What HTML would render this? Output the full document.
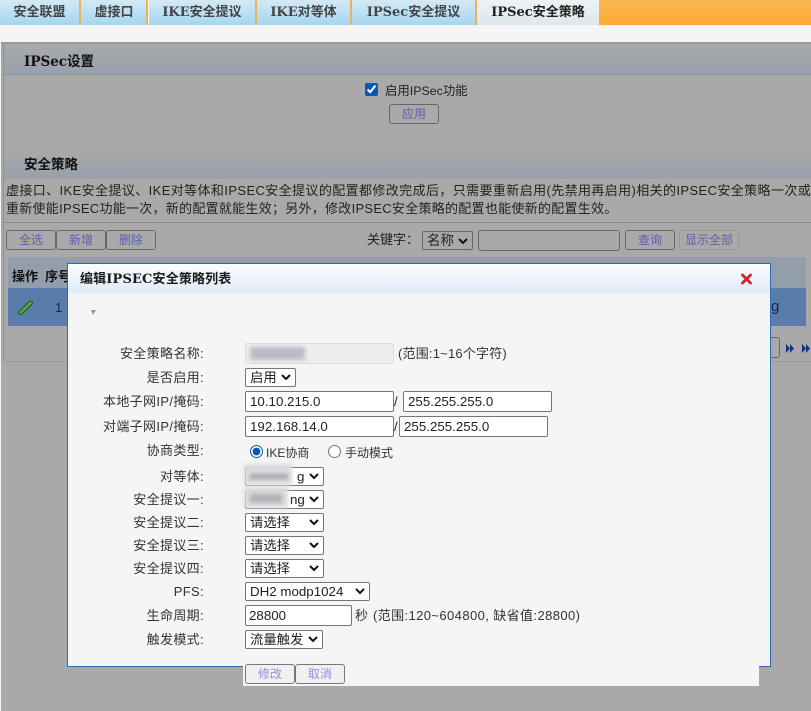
<!DOCTYPE html>
<html lang="zh">
<head>
<meta charset="utf-8">
<title>IPSec安全策略</title>
<style>
html,body{margin:0;padding:0;width:811px;height:711px;overflow:hidden;background:#f5f5f5;}
body{position:relative;font-family:"Liberation Sans","Noto Sans CJK SC",sans-serif;font-size:13px;color:#222;}
.a{position:absolute;white-space:nowrap;}
.tab{position:absolute;top:0;height:25px;line-height:25px;text-align:center;font-family:"DejaVu Serif","Noto Sans CJK SC",sans-serif;font-weight:bold;font-size:13px;color:#444;background:linear-gradient(#d4e9f5,#bfe1f3 45%,#a5d5ef);}
.sep{position:absolute;top:0;width:2px;height:25px;background:#e9b35c;}
.bar{position:absolute;left:4px;width:807px;background:linear-gradient(#a9a9a9,#98a1ac);}
.h{font-family:"DejaVu Serif","Noto Sans CJK SC",sans-serif;font-weight:bold;font-size:13.500px;color:#111;}
.btn{position:absolute;box-sizing:border-box;height:20px;border:1px solid #666;border-radius:3px;text-align:center;line-height:18px;font-size:12px;color:#5a62a8;}
.lbl{position:absolute;width:204px;left:0;text-align:right;font-size:13px;letter-spacing:.35px;color:#333;line-height:18px;white-space:nowrap;}
.in{position:absolute;box-sizing:border-box;height:21px;border:1px solid #767676;border-radius:2px;background:#fff;font-size:13.330px;line-height:19px;padding-left:4px;color:#222;}
.sel{position:absolute;box-sizing:border-box;height:19px;border:1px solid #767676;border-radius:2px;background:#fff;font-size:13.330px;line-height:18px;padding-left:4px;color:#222;}
.sel svg{position:absolute;right:4px;top:5px;}
.blur{position:absolute;filter:blur(2px);}
.note{font-size:13px;letter-spacing:.4px;line-height:18px;color:#333;}
.rad{font-size:12px;line-height:18px;color:#333;}
</style>
</head>
<body>
<div class="tab" style="left:0;width:79px">安全联盟</div>
<div class="tab" style="left:81px;width:66px">虚接口</div>
<div class="tab" style="left:149px;width:106px">IKE安全提议</div>
<div class="tab" style="left:257px;width:93px">IKE对等体</div>
<div class="tab" style="left:352px;width:123px">IPSec安全提议</div>
<div class="sep" style="left:79px"></div>
<div class="sep" style="left:146px"></div>
<div class="sep" style="left:255px"></div>
<div class="sep" style="left:350px"></div>
<div class="sep" style="left:475px"></div>
<div class="tab" style="left:477px;width:122px;border-radius:0 5px 0 0;background:linear-gradient(#eef2f4,#dfe7ec);color:#222">IPSec安全策略</div>
<div class="a" style="left:599px;top:0;width:212px;height:25px;background:linear-gradient(#f9b850,#fdaa33)"></div>

<div class="a" style="left:1px;top:42px;width:810px;height:669px;background:#a9a9a9"></div>
<div class="a" style="left:1px;top:42px;width:810px;height:2px;background:#969b9f"></div>
<div class="a" style="left:3px;top:44px;width:1px;height:316px;background:#8f9396"></div>

<div class="bar" style="top:44px;height:30px;border-bottom:1px solid #8a949e"></div>
<div class="a h" style="left:24px;top:50px">IPSec设置</div>
<input type="checkbox" checked class="a" style="left:365px;top:83px;margin:0;width:13px;height:13px;accent-color:#0b57b5">
<div class="a" style="left:385px;top:83px;font-size:12.400px;line-height:16px">启用IPSec功能</div>
<div class="btn" style="left:389px;top:104px;width:50px">应用</div>

<div class="bar" style="top:150px;height:28px;border-bottom:1px solid #a0a5aa"></div>
<div class="a h" style="left:24px;top:153px">安全策略</div>

<div class="a" style="left:6px;top:182px;font-size:13px;letter-spacing:.39px;line-height:18px;color:#222">虚接口、IKE安全提议、IKE对等体和IPSEC安全提议的配置都修改完成后，只需要重新启用(先禁用再启用)相关的IPSEC安全策略一次或</div>
<div class="a" style="left:6px;top:200px;font-size:13px;letter-spacing:.27px;line-height:18px;color:#222">重新使能IPSEC功能一次，新的配置就能生效；另外，修改IPSEC安全策略的配置也能使新的配置生效。</div>
<div class="a" style="left:4px;top:222px;width:807px;height:1px;background:#8a8a8a"></div>

<div class="btn" style="left:6px;top:230px;width:50px">全选</div>
<div class="btn" style="left:56px;top:230px;width:50px">新增</div>
<div class="btn" style="left:106px;top:230px;width:50px">删除</div>
<div class="a" style="left:367px;top:232px;font-size:13px;line-height:16px">关键字：</div>
<div class="a" style="left:422px;top:231px;box-sizing:border-box;width:51px;height:19px;border:1px solid #666;border-radius:2px;font-size:13.500px;line-height:18px;padding-left:4px">名称<svg width="10" height="7" viewBox="0 0 10 7" style="position:absolute;right:4px;top:6px"><path d="M1 1l4 4 4-4" fill="none" stroke="#111" stroke-width="2"/></svg></div>
<div class="a" style="left:478px;top:230px;box-sizing:border-box;width:142px;height:21px;border:1px solid #666;border-radius:3px"></div>
<div class="btn" style="left:625px;top:230px;width:50px">查询</div>
<div class="btn" style="left:679px;top:230px;width:60px;border-color:#999">显示全部</div>

<div class="a" style="left:8px;top:288px;width:798px;height:38px;background:#5a7cab"></div>
<div class="a" style="left:8px;top:257px;width:798px;height:31px;background:#929eab"></div>
<div class="a" style="left:12px;top:266px;font-weight:bold;font-size:13px;color:#111">操作</div>
<div class="a" style="left:45px;top:266px;font-weight:bold;font-size:13px;color:#111">序号</div>
<svg class="a" style="left:18px;top:300px" width="16" height="15" viewBox="0 0 16 15"><path d="M2.500 12.500L12.500 3" fill="none" stroke="#2a5f25" stroke-width="5" stroke-linecap="round"/><path d="M2.500 12.500L12.500 3" fill="none" stroke="#58ab40" stroke-width="2.500" stroke-linecap="round"/></svg>
<div class="a" style="left:55px;top:300px;font-size:13px;color:#1a2a3a">1</div>
<div class="a" style="left:771px;top:298px;font-size:15px;color:#1a2a3a">g</div>
<div class="a" style="left:4px;top:361px;width:807px;height:1px;background:#999"></div>
<div class="a" style="left:771px;top:337px;width:9px;height:21px;box-sizing:border-box;border:1px solid #666;border-left:none;border-radius:0 3px 3px 0"></div>
<svg class="a" style="left:786px;top:344px" width="25" height="9" viewBox="0 0 25 9"><path d="M0 0l4 4.500-4 4.500zM4 0l4 4.500-4 4.500zM16 0l4 4.500-4 4.500zM20 0l4 4.500-4 4.500z" fill="#12357a"/></svg>

<!-- dialog -->
<div class="a" style="left:67px;top:263px;width:704px;height:404px;box-sizing:border-box;border:1px solid #2a6db5;background:#f5f5f5"></div>
<div class="a" style="left:68px;top:264px;width:702px;height:29px;background:linear-gradient(#fbfdff,#dfeaf7)"></div>
<div class="a" style="left:243px;top:664px;width:516px;height:22px;background:#f5f5f5"></div>
<div class="a" style="left:80px;top:271px;font-family:'DejaVu Serif','Noto Sans CJK SC',sans-serif;font-weight:bold;font-size:13px;letter-spacing:.15px;color:#1a1a1a;line-height:17px">编辑IPSEC安全策略列表</div>
<svg class="a" style="left:741px;top:273px" width="11" height="12" viewBox="0 0 11 12"><path d="M1.500 2l8 8M9.500 2l-8 8" stroke="#d8232a" stroke-width="2.800" stroke-linecap="round"/></svg>
<svg class="a" style="left:91px;top:310px" width="5" height="6" viewBox="0 0 5 6"><path d="M0 0h5L2 5z" fill="#999"/></svg>

<div class="lbl" style="top:345px">安全策略名称:</div>
<div class="lbl" style="top:369px">是否启用:</div>
<div class="lbl" style="top:393px">本地子网IP/掩码:</div>
<div class="lbl" style="top:418px">对端子网IP/掩码:</div>
<div class="lbl" style="top:442px">协商类型:</div>
<div class="lbl" style="top:468px">对等体:</div>
<div class="lbl" style="top:491px">安全提议一:</div>
<div class="lbl" style="top:514px">安全提议二:</div>
<div class="lbl" style="top:537px">安全提议三:</div>
<div class="lbl" style="top:560px">安全提议四:</div>
<div class="lbl" style="top:583px">PFS:</div>
<div class="lbl" style="top:607px">生命周期:</div>
<div class="lbl" style="top:631px">触发模式:</div>

<div class="in" style="left:245px;top:343px;width:149px;background:#eee;border-color:#ddd"></div>
<div class="blur" style="left:250px;top:347px;width:55px;height:13px;background:#b8bcc4"></div>
<div class="a note" style="left:398px;top:345px;letter-spacing:.2px">(范围:1~16个字符)</div>

<div class="sel" style="left:245px;top:368px;width:51px">启用<svg width="10" height="7" viewBox="0 0 10 7"><path d="M1 1l4 4 4-4" fill="none" stroke="#111" stroke-width="2"/></svg></div>

<div class="in" style="left:245px;top:391px;width:149px">10.10.215.0</div>
<div class="a" style="left:394px;top:394px;font-size:13px">/</div>
<div class="in" style="left:403px;top:391px;width:149px">255.255.255.0</div>

<div class="in" style="left:245px;top:416px;width:149px">192.168.14.0</div>
<div class="a" style="left:394px;top:419px;font-size:13px">/</div>
<div class="in" style="left:399px;top:416px;width:149px">255.255.255.0</div>

<input type="radio" checked class="a" style="left:250px;top:445px;margin:0;width:13px;height:13px;accent-color:#0b57b5">
<div class="a rad" style="left:266px;top:444px">IKE协商</div>
<input type="radio" class="a" style="left:328px;top:445px;margin:0;width:13px;height:13px">
<div class="a rad" style="left:345px;top:444px">手动模式</div>

<div class="sel" style="left:245px;top:467px;width:79px"><span style="position:absolute;left:51px;top:0">g</span><svg width="10" height="7" viewBox="0 0 10 7"><path d="M1 1l4 4 4-4" fill="none" stroke="#111" stroke-width="2"/></svg></div>
<div class="blur" style="left:244px;top:464px;width:48px;height:21px;background:#dcdcde"></div>
<div class="blur" style="left:250px;top:474px;width:38px;height:5px;background:#9ea3a9"></div>
<div class="sel" style="left:245px;top:490px;width:79px"><span style="position:absolute;left:44px;top:0">ng</span><svg width="10" height="7" viewBox="0 0 10 7"><path d="M1 1l4 4 4-4" fill="none" stroke="#111" stroke-width="2"/></svg></div>
<div class="blur" style="left:244px;top:487px;width:44px;height:21px;background:#dcdcde"></div>
<div class="blur" style="left:250px;top:494px;width:32px;height:9px;background:#aeb3b8"></div>

<div class="sel" style="left:245px;top:513px;width:79px">请选择<svg width="10" height="7" viewBox="0 0 10 7"><path d="M1 1l4 4 4-4" fill="none" stroke="#111" stroke-width="2"/></svg></div>
<div class="sel" style="left:245px;top:536px;width:79px">请选择<svg width="10" height="7" viewBox="0 0 10 7"><path d="M1 1l4 4 4-4" fill="none" stroke="#111" stroke-width="2"/></svg></div>
<div class="sel" style="left:245px;top:559px;width:79px">请选择<svg width="10" height="7" viewBox="0 0 10 7"><path d="M1 1l4 4 4-4" fill="none" stroke="#111" stroke-width="2"/></svg></div>
<div class="sel" style="left:245px;top:582px;width:125px">DH2 modp1024<svg width="10" height="7" viewBox="0 0 10 7"><path d="M1 1l4 4 4-4" fill="none" stroke="#111" stroke-width="2"/></svg></div>

<div class="in" style="left:245px;top:605px;width:107px;padding-left:3px">28800</div>
<div class="a" style="left:355px;top:607px;font-size:13px;line-height:18px;color:#333">秒</div>
<div class="a note" style="left:373px;top:607px">(范围:120~604800, 缺省值:28800)</div>

<div class="sel" style="left:245px;top:630px;width:78px">流量触发<svg width="10" height="7" viewBox="0 0 10 7"><path d="M1 1l4 4 4-4" fill="none" stroke="#111" stroke-width="2"/></svg></div>

<div class="btn" style="left:245px;top:664px;width:50px;border-color:#777;color:#8a93d8;background:#f0f0f0">修改</div>
<div class="btn" style="left:295px;top:664px;width:50px;border-color:#777;color:#8a93d8;background:#f0f0f0">取消</div>
</body>
</html>
